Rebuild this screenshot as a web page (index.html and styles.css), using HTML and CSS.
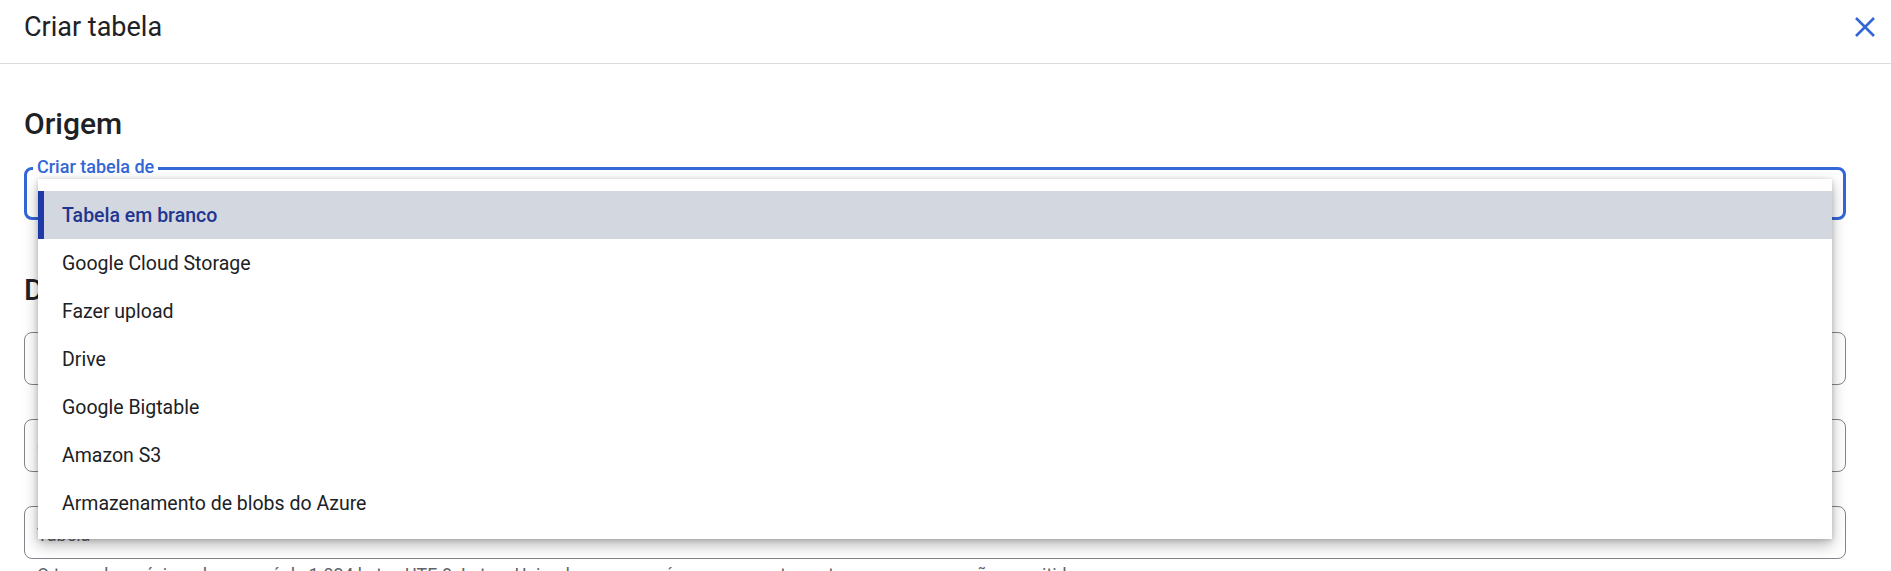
FILE: index.html
```html
<!DOCTYPE html>
<html lang="pt">
<head>
<meta charset="utf-8">
<title>Criar tabela</title>
<link rel="stylesheet" href="styles.css">
</head>
<body>
<div class="dialog">
  <header class="dialog-header">
    <h1 class="dialog-title">Criar tabela</h1>
    <button class="close-btn" aria-label="Fechar">
      <svg width="20" height="20" viewBox="0 0 20 20"><path d="M1 1L19 19M19 1L1 19" stroke="currentColor" stroke-width="2.6" fill="none"/></svg>
    </button>
  </header>
  <main class="dialog-body">
    <h2 class="section-title">Origem</h2>
    <div class="select-field">
      <span class="float-label">Criar tabela de</span>
      <ul class="menu">
        <li class="menu-item selected">Tabela em branco</li>
        <li class="menu-item">Google Cloud Storage</li>
        <li class="menu-item">Fazer upload</li>
        <li class="menu-item">Drive</li>
        <li class="menu-item">Google Bigtable</li>
        <li class="menu-item">Amazon S3</li>
        <li class="menu-item">Armazenamento de blobs do Azure</li>
      </ul>
    </div>
    <h2 class="section-title second">Destino</h2>
    <div class="input-box first"><span class="input-label">Projeto</span></div>
    <div class="input-box"><span class="input-label">Conjunto de dados</span></div>
    <div class="input-box"><span class="input-label">Tabela</span></div>
    <p class="hint">O tamanho máximo do nome é de 1.024 bytes UTF-8. Letras Unicode, marcas, números, conectores, traços e espaços são permitidos.</p>
  </main>
</div>
</body>
</html>
```

FILE: styles.css
```css
* { box-sizing: border-box; }
html, body { margin: 0; padding: 0; background: #fff; }
body {
  font-family: Roboto, "Noto Sans", "Liberation Sans", sans-serif;
  color: #202124;
  overflow: hidden;
}
.dialog { width: 1891px; }
.dialog-header {
  height: 64px;
  padding: 0 16px 10px 24px;
  display: flex;
  align-items: center;
  justify-content: space-between;
  border-bottom: 1px solid #dadce0;
}
.dialog-title {
  margin: 0;
  font-size: 27px;
  font-weight: 400;
  color: #202124;
}
.close-btn {
  border: 0;
  background: none;
  padding: 0;
  width: 20px;
  height: 20px;
  color: #3367d6;
  display: flex;
}
.dialog-body {
  padding: 0 45px 0 24px;
}
.section-title {
  margin: 42px 0 0;
  font-size: 30px;
  line-height: 36px;
  font-weight: 500;
  color: #202124;
}
.section-title.second { margin-top: 52px; }
.select-field {
  position: relative;
  margin-top: 25px;
  height: 53px;
  border: 3px solid #3367d6;
  border-radius: 8px;
}
.float-label {
  position: absolute;
  top: -14px;
  left: 6px;
  padding: 0 4px;
  background: #fff;
  color: #3367d6;
  font-size: 18px;
  line-height: 22px;
  font-weight: 500;
}
.menu {
  position: absolute;
  top: 9px;
  left: 11px;
  right: 11px;
  z-index: 5;
  margin: 0;
  padding: 12px 0;
  list-style: none;
  background: #fff;
  box-shadow: 0 6px 14px rgba(0,0,0,0.28), 0 1px 5px rgba(0,0,0,0.18);
}
.menu-item {
  height: 48px;
  display: flex;
  align-items: center;
  padding-left: 24px;
  font-size: 19.5px;
  color: #202124;
}
.menu-item.selected {
  background: #d3d7e0;
  border-left: 6px solid #1e3aa8;
  padding-left: 18px;
  color: #1f358f;
  font-weight: 500;
}
.input-box {
  margin-top: 34px;
  height: 53px;
  border: 1px solid #80868b;
  border-radius: 8px;
  display: flex;
  align-items: center;
  padding: 4px 0 0 12px;
}
.input-box.first { margin-top: 24px; }
.input-label {
  font-size: 18px;
  color: #5f6368;
}
.hint {
  margin: 6px 0 0 13px;
  font-size: 17.8px;
  line-height: 20px;
  color: #5f6368;
  white-space: nowrap;
}
```
